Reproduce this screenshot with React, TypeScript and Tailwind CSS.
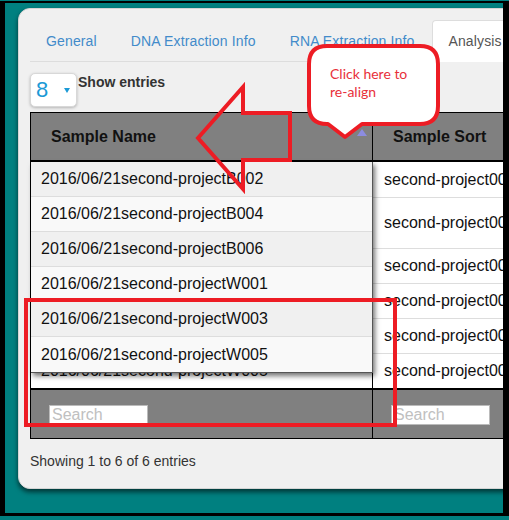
import React from "react";

const leftRows = [
  "2016/06/21second-projectB002",
  "2016/06/21second-projectB004",
  "2016/06/21second-projectB006",
  "2016/06/21second-projectW001",
  "2016/06/21second-projectW003",
  "2016/06/21second-projectW005",
];

const rightHeights = ["h-[36px]", "h-[51px]", "h-[35px]", "h-[35px]", "h-[35px]", "h-[34px]"];

export default function App() {
  return (
    <div className="relative w-[509px] h-[520px] bg-[#008080] overflow-hidden pt-px font-['Liberation_Sans',Arial,sans-serif]">
      <div className="h-[515px] border-black border-l-[5px] border-t-[2px] border-r-[6px] border-b-[3px] overflow-hidden pl-[13px] pt-[5px]">
        <div className="w-[540px] h-[481px] bg-[#f0f0f0] rounded-[12px] border border-[#d4d4d4] shadow-[0_3px_5px_rgba(0,0,0,0.6)] pl-[11px] pt-[11px]">
          {/* Tabs */}
          <div className="flex border-b border-[#ddd] text-[14px] leading-[20px] tracking-[0.14px]">
            {["General", "DNA Extraction Info", "RNA Extraction Info"].map((t) => (
              <div key={t} className="px-[15px] py-[10px] mr-[2px] border border-transparent rounded-t-[4px] -mb-px text-[#428bca] whitespace-nowrap">
                {t}
              </div>
            ))}
            <div className="px-[15px] py-[10px] mr-[2px] border border-[#ddd] border-b-white bg-white rounded-t-[4px] -mb-px text-[#555] whitespace-nowrap">
              Analysis
            </div>
          </div>

          {/* Length select */}
          <div className="flex items-start mt-[11px]">
            <div className="w-[47px] h-[34px] bg-white rounded-[5px] border border-[#d8d8d8] shadow-[0_1px_3px_rgba(0,0,0,0.25)] flex items-center pl-[5px]">
              <span className="text-[22px] leading-none text-[#1c9ad6]">8</span>
              <span className="ml-[16px] w-0 h-0 border-l-[3px] border-r-[3px] border-t-[5px] border-l-transparent border-r-transparent border-t-[#1c9ad6]"></span>
            </div>
            <div className="ml-px text-[14px] leading-[20px] font-bold text-[#333] -mt-px">Show entries</div>
          </div>

          {/* Table */}
          <div className="mt-[5px] w-[520px] border-l border-t border-black text-[16px] text-[#111]">
            {/* header */}
            <div className="flex h-[49px] bg-[#808080] border-b-2 border-black">
              <div className="w-[342px] border-r border-black flex justify-between pl-[20px] pr-[5px]">
                <span className="font-bold self-center">Sample Name</span>
                <span className="mt-[16px] w-0 h-0 border-l-[5px] border-r-[5px] border-b-[7px] border-l-transparent border-r-transparent border-b-[#8c8ce0]"></span>
              </div>
              <div className="flex-1 pl-[20px] flex items-center font-bold whitespace-nowrap">Sample Sort</div>
            </div>

            {/* body */}
            <div className="relative flex">
              <div className="w-[342px] border-r border-black bg-white">
                {leftRows.map((r, i) => (
                  <div key={r} className={`${rightHeights[i]} flex items-center pl-[10px] ${i < 5 ? "border-b border-[#ddd]" : ""}`}>
                    {r}
                  </div>
                ))}
              </div>
              <div className="flex-1 bg-white">
                {rightHeights.map((h, i) => (
                  <div key={i} className={`${h} flex items-center pl-[11px] whitespace-nowrap ${i < 5 ? "border-b border-[#ddd]" : ""}`}>
                    second-project00{i + 1}
                  </div>
                ))}
              </div>

              {/* fixed-column overlay */}
              <div className="absolute left-0 top-0 w-[342px] border-r border-b border-[#555] shadow-[2px_3px_5px_rgba(0,0,0,0.55)]">
                {leftRows.map((r, i) => (
                  <div key={r} className={`h-[35px] flex items-center pl-[10px] ${i % 2 === 0 ? "bg-[#f0f0f0]" : "bg-[#f9f9f9]"} ${i < 5 ? "border-b border-[#ddd]" : ""}`}>
                    {r}
                  </div>
                ))}
              </div>
            </div>

            {/* footer */}
            <div className="flex h-[51px] bg-[#808080] border-t-2 border-b border-black">
              <div className="w-[342px] border-r border-black pl-[18px] pt-[15px]">
                <div className="w-[99px] h-[20px] bg-white border border-[#bbb] text-[#c0c0c0] leading-[18px] pl-[2px]">Search</div>
              </div>
              <div className="flex-1 pl-[18px] pt-[15px]">
                <div className="w-[99px] h-[20px] bg-white border border-[#bbb] text-[#c0c0c0] leading-[18px] pl-[2px]">Search</div>
              </div>
            </div>
          </div>

          <div className="mt-[12px] text-[14px] leading-[20px] text-[#333]">Showing 1 to 6 of 6 entries</div>
        </div>
      </div>

      {/* annotations */}
      <svg className="absolute left-0 top-0 pointer-events-none" width="509" height="520" viewBox="0 0 509 520">
        <path d="M198,138 L243,87 L243,113 L290,113 L290,160 L243,160 L243,189 Z" fill="none" stroke="#ed1c24" strokeWidth="4" strokeLinejoin="miter" />
        <path
          d="M327,46 H420 Q438,46 438,64 V106 Q438,124 420,124 H362 L345,137 L328,124 H327 Q309,124 309,106 V64 Q309,46 327,46 Z"
          fill="#ffffff"
          stroke="#ed1c24"
          strokeWidth="4"
          strokeLinejoin="round"
        />
        <text x="330" y="79" fill="#e8303a" fontSize="14" fontFamily="Lato, 'Noto Sans', sans-serif">Click here to</text>
        <text x="330" y="97" fill="#e8303a" fontSize="14" fontFamily="Lato, 'Noto Sans', sans-serif">re-align</text>
        <rect x="26" y="300" width="369" height="125" fill="none" stroke="#ed1c24" strokeWidth="4" />
      </svg>
    </div>
  );
}
